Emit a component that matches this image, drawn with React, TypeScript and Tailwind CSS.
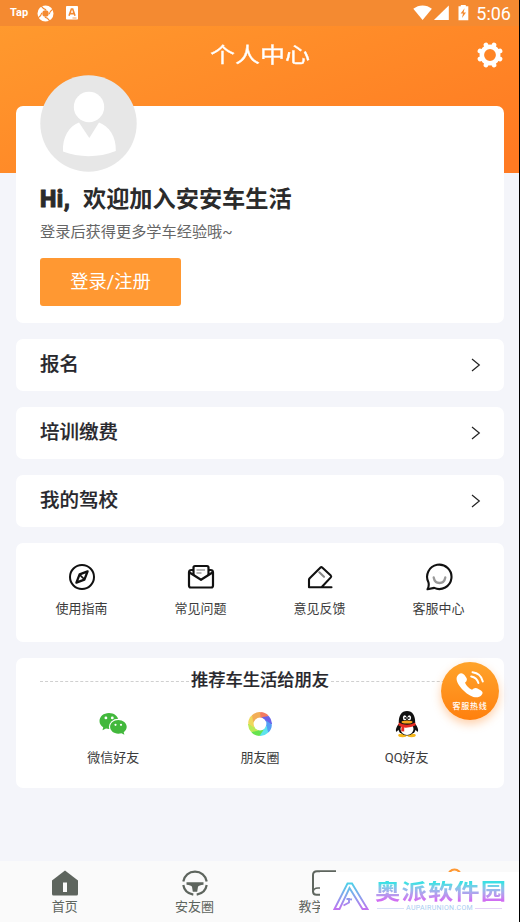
import React from "react";

const FONT = "font-['Roboto','Noto_Sans_CJK_SC',sans-serif]";

function StatusBar() {
  return (
    <div className="flex h-[26px] items-center bg-[#f48a31] pr-[8px] pl-[10px] text-white">
      <span className="w-[27px] pb-[2px] text-[11px] leading-none font-bold">Tap</span>
      <svg className="h-[17px] w-[17px]" viewBox="0 0 17 17" fill="none">
        <circle cx="8.5" cy="8.5" r="5.6" stroke="#fff" strokeWidth="4.800" />
        <path d="M9.200 4.800Q6.500 4.500 4.300 1.200M12.200 9.200Q12.500 6.500 15.800 4.300M7.800 12.200Q10.500 12.500 12.700 15.800M4.800 7.800Q4.500 10.500 1.200 12.700" stroke="#f48a31" strokeWidth="1.200" />
      </svg>
      <svg className="ml-[12px] h-[14px] w-[12px]" viewBox="0 0 12 14">
        <rect width="12" height="13.5" rx="0.8" fill="#fff" />
        <path d="M3 9.7L5.4 3h1.3L9 9.7M4 7.6h4" fill="none" stroke="#f48a31" strokeWidth="1.6" />
        <path d="M6.5 12h4" stroke="#f48a31" strokeWidth="0.8" />
      </svg>
      <svg className="ml-auto h-[16px] w-[56px]" viewBox="0 0 56 16" fill="#fff">
        <path d="M0.3 3.800C5.7-.7 13.5-.7 18.900 3.800L9.600 15z" />
        <path d="M35.8 0.500v14.600H20.9z" />
        <path d="M45.500 1.300h2.300V-.1h5v1.400h2.500v14H45.500z" />
        <path d="M51.600 3.300l-4 5.200h2.400l-1 4.600 4-5.700h-2.400z" fill="#f48a31" />
      </svg>
      <span className="ml-[7px] pt-[1px] text-[18px] leading-none">5:06</span>
    </div>
  );
}

function GearIcon() {
  return (
    <svg className="h-[28px] w-[28px]" viewBox="0 0 28 28" fill="none" stroke="#fff">
      <circle cx="14" cy="14" r="8.200" strokeWidth="4.600" />
      <g strokeWidth="4.800" strokeLinecap="round">
        <path d="M10.500 5.400l-.500-1.400M17.500 5.400l.500-1.400M10.500 22.600l-.500 1.400M17.500 22.600l.500 1.400M5.400 10.500l-1.400-.500M5.400 17.500l-1.400.500M22.600 10.500l1.400-.500M22.600 17.500l1.400.500" />
      </g>
    </svg>
  );
}

function Avatar() {
  return (
    <svg className="h-[97px] w-[97px]" viewBox="0 0 97 97">
      <circle cx="48.5" cy="48.5" r="48.2" fill="#e7e7e7" />
      <circle cx="49" cy="32" r="15.2" fill="#fff" />
      <path d="M39 47.5L49.3 63 59 47.5C69 51 76.5 62 75.8 76 59 82.8 39 82.8 23 76.500 22.300 62 29 51 39 47.500z" fill="#fff" />
    </svg>
  );
}

function MenuRow({ label }: { label: string }) {
  return (
    <div className="mt-[16px] flex h-[52px] items-center justify-between rounded-[7px] bg-white pr-[23px] pl-[24px]">
      <span className="pb-[1px] text-[19.500px] leading-[28px] font-medium text-[#27272c] [-webkit-text-stroke:0.200px_#27272c]">{label}</span>
      <svg className="h-[14px] w-[10px]" viewBox="0 0 10 14" fill="none">
        <path d="M1 1l7.300 6L1 13" stroke="#222" strokeWidth="1.200" />
      </svg>
    </div>
  );
}

function GuideIcon() {
  return (
    <svg className="h-[28px] w-[28px]" viewBox="0 0 28 28" fill="none" stroke="#111" strokeWidth="2">
      <circle cx="14" cy="14" r="12" />
      <path d="M19.600 8.400l-8 3-3.200 8.200 8-3z" strokeLinejoin="round" strokeWidth="2.300" />
      <path d="M11.600 11.600l4.800 4.800" strokeWidth="1.500" />
    </svg>
  );
}

function MailIcon() {
  return (
    <svg className="h-[28px] w-[28px]" viewBox="0 0 28 28" fill="none" stroke="#111" strokeWidth="2.200" strokeLinejoin="round">
      <path d="M6.500 7H4.500Q2 7 2 9.500V22.500q0 2 1.800 2h20.400q1.800 0 1.800-2V9.500Q26 7 23.500 7h-2" />
      <path d="M6.500 12V4.500Q6.500 3 8 3h12q1.500 0 1.500 1.500V12" />
      <path d="M2.500 9.500L14 16.800 25.500 9.500" />
      <path d="M9.500 7H18M9.500 10h5" stroke="#777" strokeWidth="1.200" />
    </svg>
  );
}

function FeedbackIcon() {
  return (
    <svg className="h-[28px] w-[28px]" viewBox="0 0 28 28" fill="none" stroke="#111" strokeWidth="2.100" strokeLinejoin="round" strokeLinecap="round">
      <path d="M25.500 24.300H3v-7.500Q3 16 3.700 15.200L14.500 4.600Q15.300 3.800 16.200 4.600L24.800 12.600Q25.600 13.500 24.800 14.400L16 23.800" />
      <path d="M13.300 9.300l4.700 4.500" stroke="#888" />
    </svg>
  );
}

function ServiceIcon() {
  return (
    <svg className="h-[28px] w-[28px]" viewBox="0 0 28 28" fill="none" stroke="#111" strokeWidth="2.100" strokeLinejoin="round">
      <path d="M3.500 19.500A12.200 12.200 0 1 1 9.200 24.900L2.500 26.300Q4.300 23 3.500 19.500z" />
      <path d="M8.700 14.500q1 5.500 5.800 5.500t5.800-5.500" stroke="#999" strokeWidth="2.300" strokeLinecap="round" />
    </svg>
  );
}

function WechatIcon() {
  return (
    <svg className="h-[26px] w-[28px]" viewBox="0 0 28 26">
      <path d="M10 2C4.500 2 .5 5.600.5 10c0 2.700 1.400 4.800 3.700 6.300L3.500 19.200 7 17.600c1.500.5 3 .5 4.200.4L19.500 9C18.800 4.800 14.900 2 10 2z" fill="#42b83c" />
      <ellipse cx="19.200" cy="16" rx="9.300" ry="8.200" fill="#fff" />
      <path d="M19.300 9c-4.700 0-8.200 3-8.200 6.800s3.500 6.900 8.200 6.900c1.200 0 2.200-.2 3.200-.5l2.900 1.600-.7-2.600c1.900-1.300 3-3.200 3-5.400C27.700 12 24 9 19.300 9z" fill="#42b83c" />
      <circle cx="6.900" cy="6.900" r="1.400" fill="#fff" />
      <circle cx="13.300" cy="6.900" r="1.400" fill="#fff" />
      <circle cx="16.500" cy="13.800" r="1.100" fill="#fff" />
      <circle cx="22" cy="13.800" r="1.100" fill="#fff" />
    </svg>
  );
}

const BLADES = [
  ["#f47b62", "rotate(0 12 12)"],
  ["#6b62e8", "rotate(45 12 12)"],
  ["#549df5", "rotate(90 12 12)"],
  ["#5ee3ed", "rotate(135 12 12)"],
  ["#66e34e", "rotate(180 12 12)"],
  ["#b9eb57", "rotate(225 12 12)"],
  ["#efd85c", "rotate(270 12 12)"],
  ["#f2ae57", "rotate(315 12 12)"],
];

function MomentsIcon() {
  return (
    <svg className="h-[24px] w-[24px]" viewBox="0 0 24 24">
      {BLADES.map(([color, transform]) => (
        <path key={color} d="M8.500 6L12.500 .1A12 12 0 0 1 20.500 3.500L17.500 7.400 8.500 6z" fill={color} transform={transform} />
      ))}
      <circle cx="12" cy="12" r="6.400" fill="#fff" />
    </svg>
  );
}

function QQIcon() {
  return (
    <svg className="h-[28px] w-[24px]" viewBox="0 0 24 28">
      <path d="M3.600 14C1.500 16.500.5 19.500 1 21.500c.6.500 1.600-.5 2.300-1.800L5 23h14l1.700-3.300c.7 1.300 1.700 2.300 2.300 1.800.5-2-.5-5-2.600-7.500z" fill="#111" />
      <ellipse cx="7.500" cy="25.300" rx="4.300" ry="1.900" fill="#f7b81b" />
      <ellipse cx="16.500" cy="25.300" rx="4.300" ry="1.900" fill="#f7b81b" />
      <ellipse cx="12" cy="18.500" rx="8" ry="6.900" fill="#111" />
      <ellipse cx="12" cy="19" rx="6.500" ry="5.900" fill="#fff" />
      <path d="M3.800 13C3.600 5.500 6.500 1 12 1s8.400 4.500 8.200 12c-2 3-14.400 3-16.400 0z" fill="#111" />
      <ellipse cx="9.700" cy="7.800" rx="1.800" ry="2.500" fill="#fff" />
      <ellipse cx="14.300" cy="7.800" rx="1.800" ry="2.500" fill="#fff" />
      <circle cx="10.200" cy="8" r=".9" fill="#111" />
      <circle cx="13.800" cy="8" r=".9" fill="#111" />
      <ellipse cx="12" cy="12" rx="5.500" ry="1.500" fill="#f7a51b" />
      <path d="M3.800 12.400q8.200 4.500 16.400 0l.6 2.800q-5 2.800-11.600 2.400v4l-3-.4.300-4.200-3.200-1.700z" fill="#e62c22" />
    </svg>
  );
}

function HotlineButton() {
  return (
    <div className="absolute top-[662px] left-[441px] flex h-[58px] w-[58px] flex-col items-center rounded-full bg-linear-to-b from-[#ffa32a] to-[#ff800d] shadow-[0_4px_10px_#ff8a2a66]">
      <svg className="mt-[8px] h-[30px] w-[30px]" viewBox="0 0 30 30">
        <path d="M3.500 4.600Q6.500 1.500 9.500 5l2 3q1.300 2.300-1.500 4.800 2 4.500 7 7 2.500-2.800 5-1.500l4 2.200q3 2 .4 4.800C22.500 29.500 15 27 8.500 20.500S-.5 8 3.500 4.600z" fill="#fff" />
        <path d="M17.500 2.200q8.500 1 10.300 9.300M16.200 6.500q5.500.8 7.200 6.500" fill="none" stroke="#fff" strokeWidth="2" strokeLinecap="round" />
      </svg>
      <span className="mt-[1px] text-[8px] leading-[11px] font-medium tracking-[0.800px] whitespace-nowrap text-white">客服热线</span>
    </div>
  );
}

function HomeIcon() {
  return (
    <svg className="h-[26px] w-[28px]" viewBox="0 0 28 26">
      <path d="M14 .5L27 10.500V24q0 1.500-1.500 1.500h-23Q1 25.500 1 24V10.500z" fill="#5e655e" />
      <path d="M12 12.500h4v9.500h-4z" fill="#fafafa" />
    </svg>
  );
}

function WheelIcon() {
  return (
    <svg className="h-[26px] w-[28px]" viewBox="0 0 28 26" fill="none" stroke="#5e655e" strokeWidth="2.200">
      <path d="M2.300 11.500C3.300 5.500 8 1.700 14 1.700s10.700 3.800 11.700 9.800M2.300 15c.8 5 4.500 8.600 10 9.600M25.700 15c-.8 5-4.500 8.600-10 9.600" />
      <path d="M5.500 12.300h17v2.400q-4.500.3-5.500 2l-.8 5h-4.400l-.8-5q-1-1.700-5.500-2z" fill="#5e655e" stroke="none" />
    </svg>
  );
}

function BookIcon() {
  return (
    <svg className="h-[26px] w-[28px]" viewBox="0 0 28 26" fill="none" stroke="#5e655e" strokeWidth="2">
      <path d="M26 1.200H7Q3 1.200 3 5v16.500q0 3.200 3.500 3.200H26" />
      <path d="M3 22q.5-4 5-4h18" strokeWidth="1.500" />
    </svg>
  );
}

function Watermark() {
  return (
    <div className="absolute top-[872px] left-[320px] flex h-[50px] w-[200px] bg-white">
      <svg className="mt-[10px] ml-[13px] h-[29px] w-[37px]" viewBox="0 0 37 29" fill="none" stroke="url(#mark)" strokeWidth="1.900">
        <defs>
          <linearGradient id="mark" x1="0" y1="0" x2="0" y2="29" gradientUnits="userSpaceOnUse">
            <stop stopColor="#48d6e8" />
            <stop offset="1" stopColor="#c86cf0" />
          </linearGradient>
        </defs>
        <path d="M1.500 27L14.500 1.500h4.500L34.500 27H29.500L16.500 6 6.500 27z" />
        <path d="M10.500 23.500l5.500-3v-3.500h-2.500M16 17l3 .5" />
      </svg>
      <div className="mt-[9px] ml-[5px] w-[132px]">
        <div className="w-[115px] origin-left scale-x-[1.150] bg-linear-to-b from-[#3ce0e4] from-10% to-[#d16af2] to-90% bg-clip-text text-[22px] leading-[22px] font-bold tracking-[1px] whitespace-nowrap text-transparent">奥派软件园</div>
        <div className="mt-[1px] ml-[2px] flex w-[125px] items-center gap-[2px] text-[7px] leading-[9px] text-[#a9cdf0]">
          <span className="h-px flex-1 bg-[#d8e0f7]" />
          <span className="tracking-[0.300px]">AUPAIRUNION.COM</span>
          <span className="h-px flex-1 bg-[#e5d3f7]" />
        </div>
      </div>
    </div>
  );
}

const TOOLS = [
  { label: "使用指南", icon: <GuideIcon /> },
  { label: "常见问题", icon: <MailIcon /> },
  { label: "意见反馈", icon: <FeedbackIcon /> },
  { label: "客服中心", icon: <ServiceIcon /> },
];

const SHARES = [
  { label: "微信好友", icon: <WechatIcon /> },
  { label: "朋友圈", icon: <MomentsIcon /> },
  { label: "QQ好友", icon: <QQIcon /> },
];

export default function App() {
  return (
    <div className={`relative flex h-[922px] w-[520px] flex-col overflow-hidden border-r border-black bg-[#f4f5fa] ${FONT}`}>
      <header className="h-[173px] shrink-0 bg-linear-[160deg,#ff9a2e_5%,#ff7a22_95%]">
        <StatusBar />
        <div className="grid h-[57px] grid-cols-[1fr_auto_1fr] items-center">
          <h1 className="col-start-2 scale-x-[1.190] text-[21px] leading-[28px] text-white [-webkit-text-stroke:0.300px_#fff]">个人中心</h1>
          <div className="mr-[15px] justify-self-end">
            <GearIcon />
          </div>
        </div>
      </header>

      <main className="relative -mt-[67px] flex-1 pr-[15px] pl-[16px]">
        <section className="h-[217px] rounded-[7px] bg-white px-[24px]">
          <div className="-mt-[31px] inline-block h-[97px] align-top">
            <Avatar />
          </div>
          <h2 className="mt-[12px] flex h-[30px] items-center text-[23.200px] leading-[30px] font-bold whitespace-nowrap text-[#2b2b2b]">
            <span className="w-[43px] font-black tracking-[0.500px] [-webkit-text-stroke:0.800px_#2b2b2b]">Hi,</span>
            <span>欢迎加入安安车生活</span>
          </h2>
          <p className="mt-[8px] text-[15.200px] leading-[20px] text-[#666]">登录后获得更多学车经验哦~</p>
          <button className="mt-[16px] h-[48px] w-[141px] rounded-[3px] bg-[#ff9832] pb-[1px] text-[18.300px] leading-[26px] text-white">登录/注册</button>
        </section>

        <MenuRow label="报名" />
        <MenuRow label="培训缴费" />
        <MenuRow label="我的驾校" />

        <section className="mt-[16px] grid h-[99px] grid-cols-4 rounded-[7px] bg-white px-[6px] pt-[20px]">
          {TOOLS.map((item) => (
            <div key={item.label} className="flex flex-col items-center">
              {item.icon}
              <span className="mt-[8px] text-[13px] leading-[20px] text-[#3c3c3c]">{item.label}</span>
            </div>
          ))}
        </section>

        <section className="mt-[16px] h-[130px] rounded-[7px] bg-white px-[24px] pt-[8px]">
          <div className="flex items-center gap-[2px]">
            <span className="mt-[3px] flex-1 border-t border-dashed border-[#d0d0d0]" />
            <span className="text-[17.300px] leading-[28px] font-medium text-[#27272c] [-webkit-text-stroke:0.200px_#27272c]">推荐车生活给朋友</span>
            <span className="mt-[3px] flex-1 border-t border-dashed border-[#d0d0d0]" />
          </div>
          <div className="mt-[16px] grid grid-cols-3">
            {SHARES.map((item) => (
              <div key={item.label} className="flex flex-col items-center">
                <div className="flex h-[28px] items-center">{item.icon}</div>
                <span className="mt-[10px] text-[13px] leading-[20px] text-[#3c3c3c]">{item.label}</span>
              </div>
            ))}
          </div>
        </section>
      </main>

      <nav className="grid h-[61px] shrink-0 grid-cols-4 bg-[#fafafa] pt-[9px] text-[13px] leading-[20px] text-[#5e655e]">
        <div className="flex flex-col items-center gap-[1px]">
          <HomeIcon />
          <span>首页</span>
        </div>
        <div className="flex flex-col items-center gap-[1px]">
          <WheelIcon />
          <span>安友圈</span>
        </div>
        <div className="flex flex-col items-center gap-[1px]">
          <BookIcon />
          <span className="w-[52px]">教学</span>
        </div>
        <div className="flex flex-col items-center">
          <svg className="-mt-[3px] h-[26px] w-[28px]" viewBox="0 0 28 26" fill="none">
            <circle cx="14.500" cy="9" r="6.500" stroke="#ff9832" strokeWidth="2.200" />
          </svg>
        </div>
      </nav>

      <HotlineButton />
      <Watermark />
    </div>
  );
}
